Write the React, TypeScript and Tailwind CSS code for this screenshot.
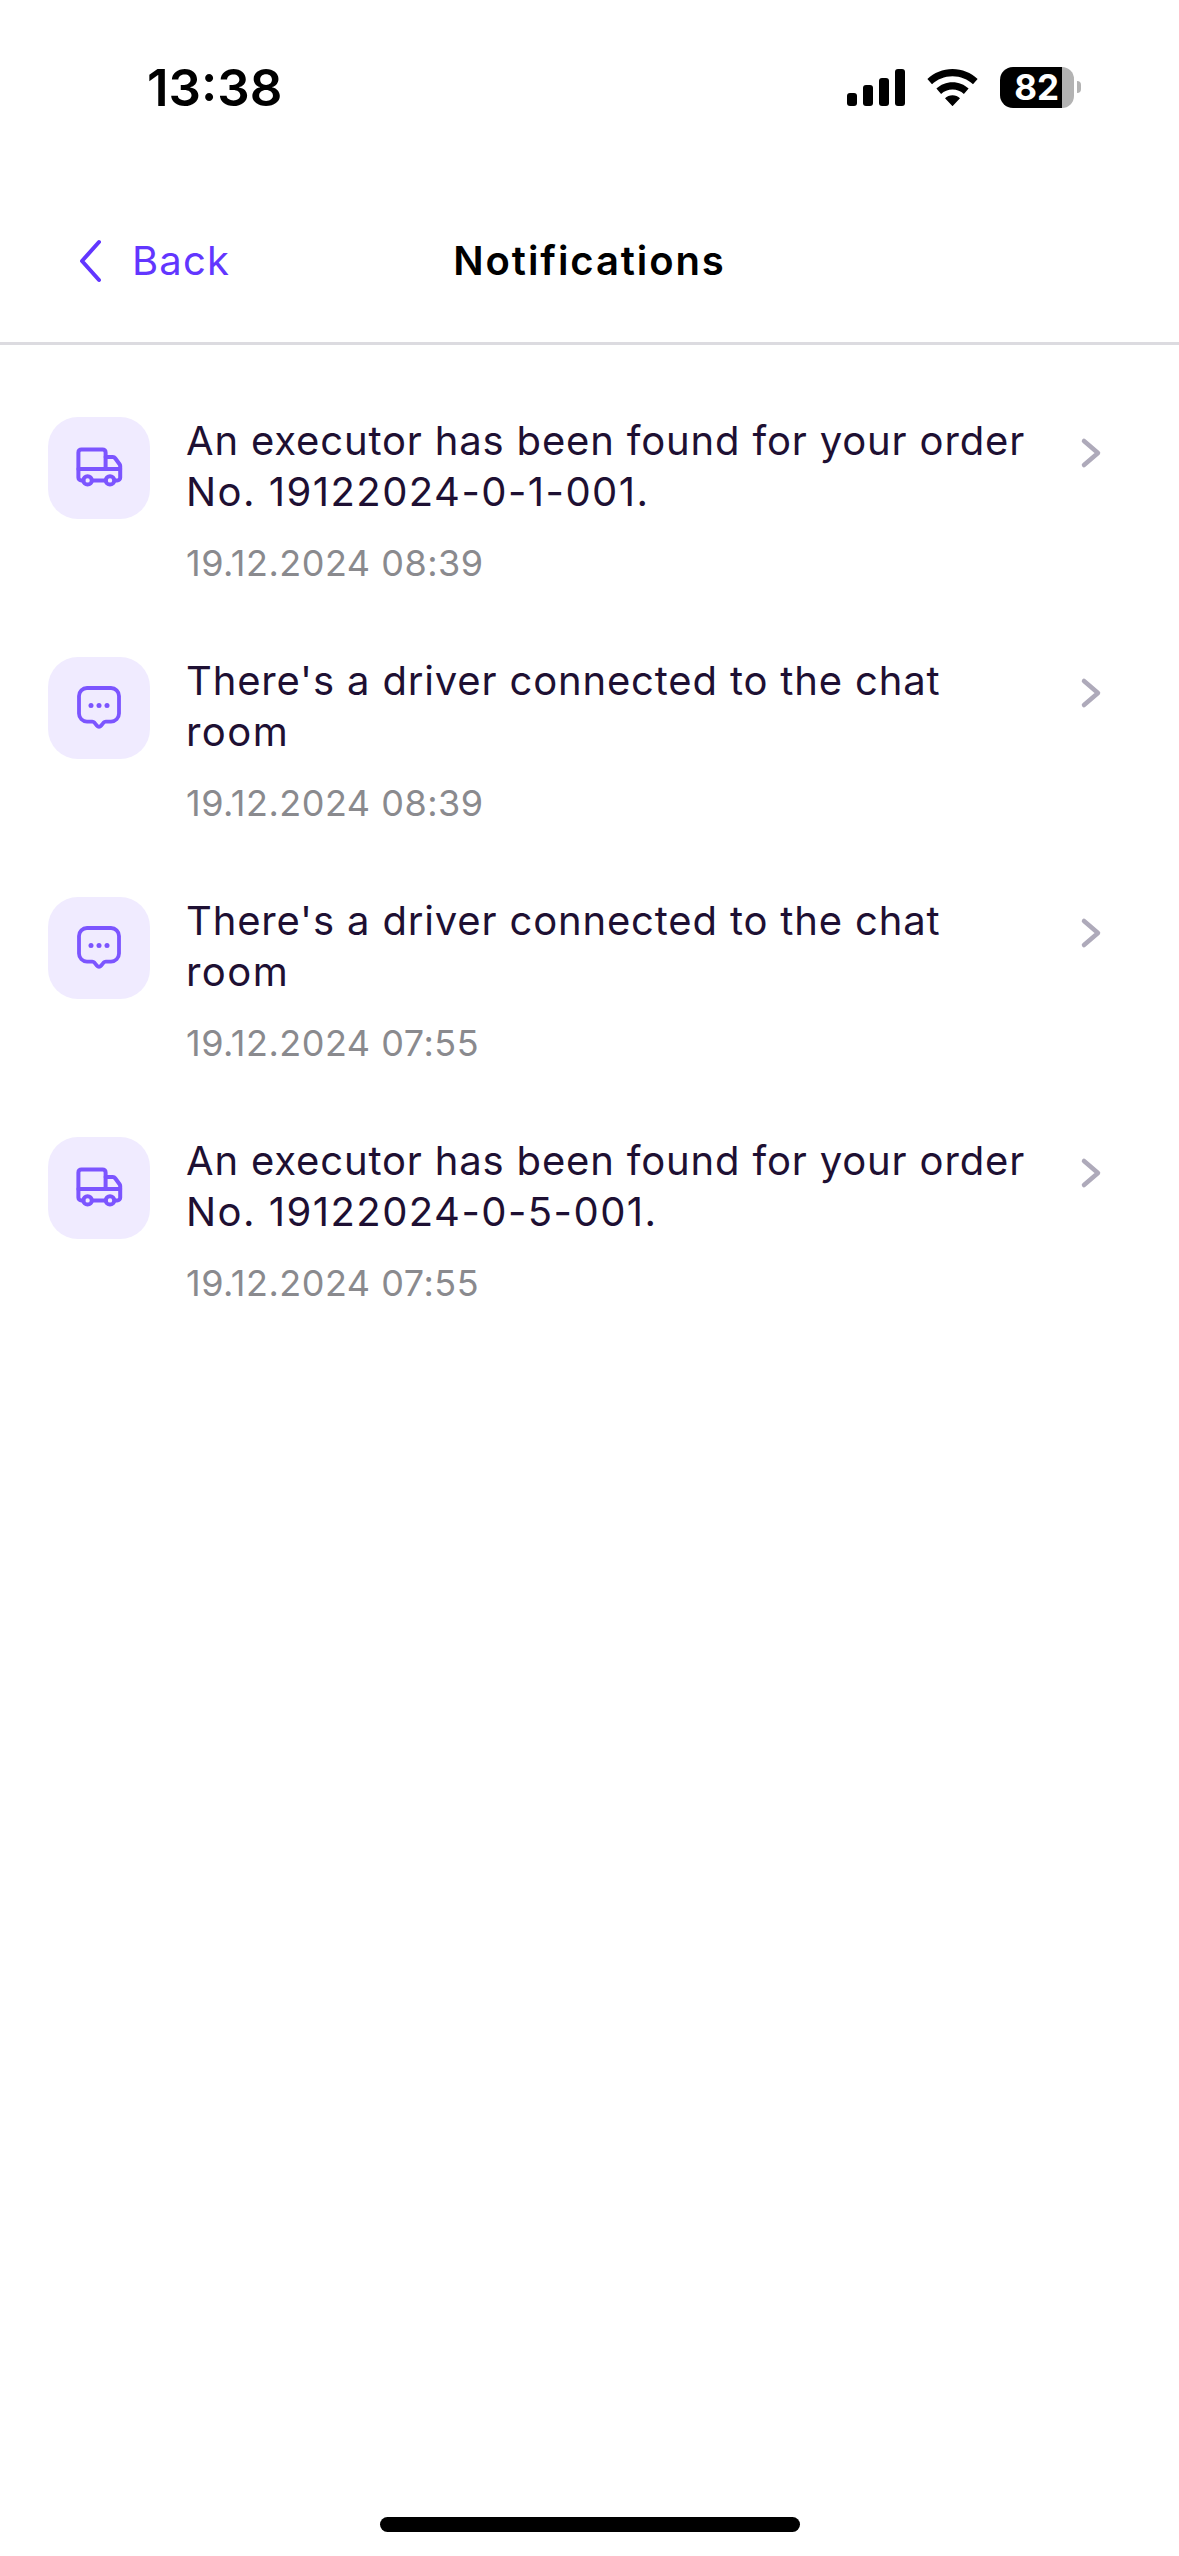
const notifications = [
  { kind: 'truck', title: 'An executor has been found for your order', detail: 'No. 19122024-0-1-001.', date: '19.12.2024 08:39' },
  { kind: 'chat', title: "There's a driver connected to the chat", detail: 'room', date: '19.12.2024 08:39' },
  { kind: 'chat', title: "There's a driver connected to the chat", detail: 'room', date: '19.12.2024 07:55' },
  { kind: 'truck', title: 'An executor has been found for your order', detail: 'No. 19122024-0-5-001.', date: '19.12.2024 07:55' },
];

function TruckIcon() {
  return (
    <svg width="48" height="48" viewBox="0 0 24 24" fill="none" stroke="#7C55FF" strokeWidth="2" strokeLinecap="round" strokeLinejoin="round">
      <path d="M4.2 18.2H3.2a1.5 1.5 0 0 1-1.5-1.5V4.2a1.5 1.5 0 0 1 1.5-1.5h10.6a1.5 1.5 0 0 1 1.5 1.5v8.3" />
      <path d="M1.7 12.5h20.9" />
      <path d="M15.3 6.5h3.6a1.5 1.5 0 0 1 1.2.6l2.2 3a1.5 1.5 0 0 1 .3.9v5.7a1.5 1.5 0 0 1-1.5 1.5h-1.2" />
      <path d="M8.5 18.2h6.8" />
      <circle cx="6.3" cy="18.2" r="2.1" />
      <circle cx="17.5" cy="18.2" r="2.1" />
    </svg>
  );
}

function ChatIcon() {
  return (
    <svg width="48" height="48" viewBox="0 0 24 24" fill="none" stroke="#7C55FF" strokeWidth="1.9" strokeLinecap="round" strokeLinejoin="round">
      <path d="M6 2h12a4 4 0 0 1 4 4v8.8a4 4 0 0 1-4 4h-2.6a1.5 1.5 0 0 0-1.1.5l-1.3 1.6a1.3 1.3 0 0 1-2 0l-1.3-1.6a1.5 1.5 0 0 0-1.1-.5H6a4 4 0 0 1-4-4V6a4 4 0 0 1 4-4z" />
      <circle cx="8" cy="10.8" r="1.25" fill="#7C55FF" stroke="none" />
      <circle cx="12" cy="10.8" r="1.25" fill="#7C55FF" stroke="none" />
      <circle cx="16" cy="10.8" r="1.25" fill="#7C55FF" stroke="none" />
    </svg>
  );
}

function StatusIcons() {
  return (
    <div className="flex items-center">
      <div className="flex items-end gap-[6px] h-[37px]">
        <div className="w-[10px] h-[13px] rounded-[3px] bg-black" />
        <div className="w-[10px] h-[21px] rounded-[3px] bg-black" />
        <div className="w-[10px] h-[28px] rounded-[3px] bg-black" />
        <div className="w-[10px] h-[37px] rounded-[3px] bg-black" />
      </div>
      <svg className="ml-[22px]" width="51" height="37" viewBox="0 0 51 37" fill="black">
        <path d="M25.5 0C15.8 0 7 3.8.4 10l4.6 5.3c5.3-5 12.5-8.1 20.5-8.1s15.2 3.1 20.5 8.1l4.6-5.3C44 3.8 35.2 0 25.5 0z" />
        <path d="M25.5 13.2c-6.2 0-11.9 2.4-16.1 6.4l4.7 5.3c3-2.8 7-4.5 11.4-4.5s8.4 1.7 11.4 4.5l4.7-5.3c-4.2-4-9.9-6.4-16.1-6.4z" />
        <path d="M25.5 26.3c-2.9 0-5.5 1.1-7.5 2.9l7.5 8 7.5-8c-2-1.8-4.6-2.9-7.5-2.9z" />
      </svg>
      <div className="ml-[22px] flex items-center">
        <div className="w-[62px] h-[41px] rounded-l-[13px] bg-black overflow-hidden flex justify-end pr-[3px]">
          <span className="text-white text-[35px] leading-[41px] font-bold">82</span>
        </div>
        <div className="w-[12px] h-[41px] rounded-r-[13px] bg-[#B3B3B3]" />
        <div className="ml-[3px] w-[4px] h-[12px] rounded-r-[4px] bg-[#B3B3B3]" />
      </div>
    </div>
  );
}

export default function App() {
  return (
    <div className="flex flex-col h-[2556px] bg-white font-['Inter',sans-serif] overflow-hidden">
      <div className="flex items-center justify-between h-[174px] pl-[147px] pr-[98px]">
        <span className="text-[51px] leading-none font-semibold text-black">13:38</span>
        <StatusIcons />
      </div>

      <div className="grid grid-cols-3 items-center h-[171px] border-b-[3px] border-[#DCDBE0] pt-[6px]">
        <div className="flex items-center pl-[72px] text-[#6236FF]">
          <svg width="36" height="48" viewBox="0 0 36 48" fill="none" stroke="currentColor" strokeWidth="4" strokeLinecap="round" strokeLinejoin="round">
            <path d="M27 5 L10 24 L27 43" />
          </svg>
          <span className="ml-[24px] text-[40px] leading-none tracking-[1.2px]">Back</span>
        </div>
        <h1 className="text-center text-[40px] leading-none font-semibold tracking-[1.9px] text-black whitespace-nowrap">Notifications</h1>
        <div />
      </div>

      <div className="flex flex-col pt-[72px]">
        {notifications.map((n, i) => (
          <div key={i} className="flex h-[240px] pl-[48px]">
            <div className="flex items-center justify-center w-[102px] h-[102px] rounded-[30px] bg-[#F0EBFF] shrink-0">
              {n.kind === 'truck' ? <TruckIcon /> : <ChatIcon />}
            </div>
            <div className="ml-[36px] w-[848px] -mt-[2px] text-[40px] leading-[51px] text-[#1E1033]">
              <p className="tracking-[0.84px]">{n.title}</p>
              <p className="tracking-[1.46px]">{n.detail}</p>
              <p className="mt-[26px] text-[36px] leading-[40px] tracking-[0.5px] text-[#8A8A8E]">{n.date}</p>
            </div>
            <svg className="ml-[36px] mt-[12px]" width="48" height="48" viewBox="0 0 48 48" fill="none" stroke="#AEAABA" strokeWidth="4.5" strokeLinecap="round" strokeLinejoin="round">
              <path d="M14 12 L28 24 L14 36" />
            </svg>
          </div>
        ))}
      </div>

      <div className="mt-auto mb-[24px] mx-auto w-[420px] h-[15px] rounded-full bg-black" />
    </div>
  );
}
